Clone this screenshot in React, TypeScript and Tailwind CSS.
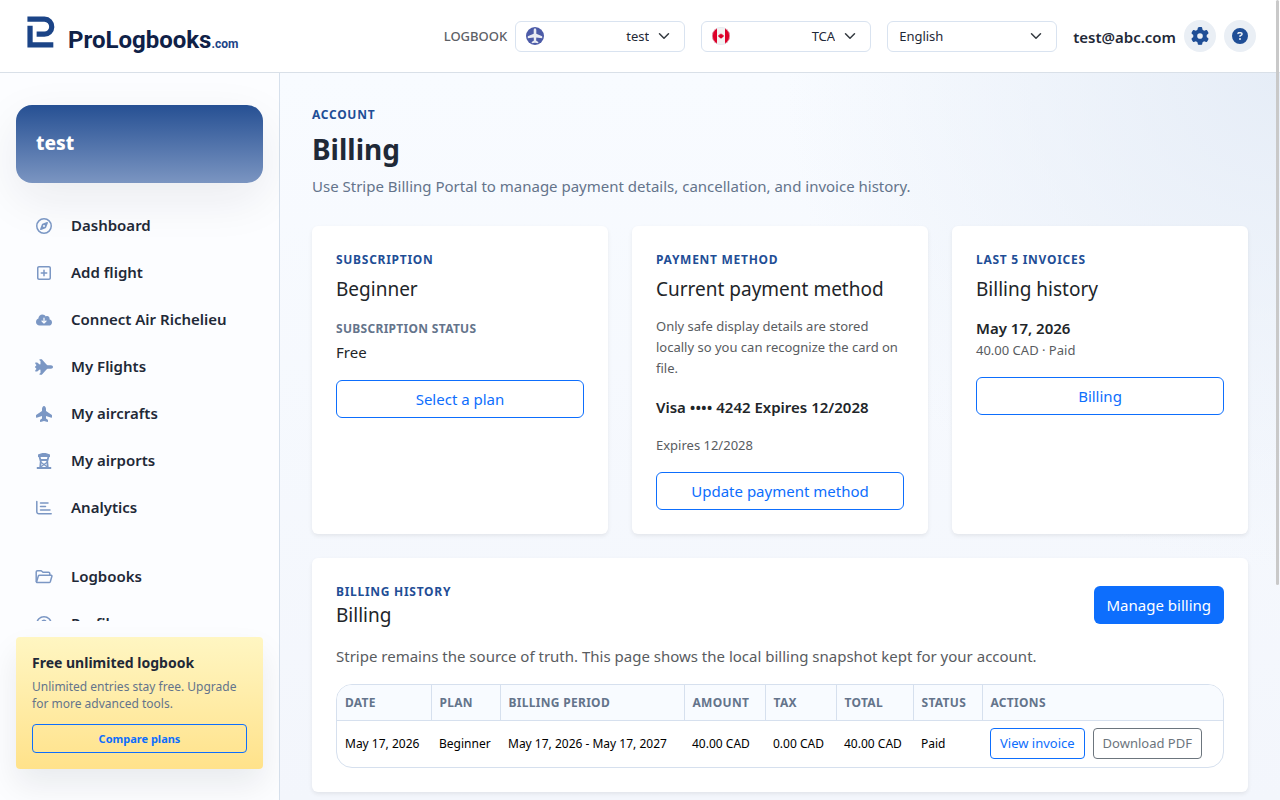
import { FaCircleQuestion, FaCloudArrowDown, FaGear, FaPlaneUp, FaRegCircleUser, FaRegCompass, FaRegSquarePlus } from "react-icons/fa6"
import type { ReactNode } from "react"

const mainNav = [
  { label: "Dashboard", icon: <FaRegCompass /> },
  { label: "Add flight", icon: <FaRegSquarePlus /> },
  { label: "Connect Air Richelieu", icon: <FaCloudArrowDown /> },
  { label: "My Flights", icon: <JetIcon /> },
  { label: "My aircrafts", icon: <FaPlaneUp /> },
  { label: "My airports", icon: <TowerIcon /> },
  { label: "Analytics", icon: <ChartIcon /> },
]

const accountNav = [
  { label: "Logbooks", icon: <FolderIcon /> },
  { label: "Profile", icon: <FaRegCircleUser /> },
]

const invoices = [
  {
    date: "May 17, 2026",
    plan: "Beginner",
    period: "May 17, 2026 - May 17, 2027",
    amount: "40.00 CAD",
    tax: "0.00 CAD",
    total: "40.00 CAD",
    status: "Paid",
  },
]

function JetIcon() {
  return (
    <svg viewBox="0 0 18 16" fill="currentColor">
      <path d="M4.500.3h2.300L11.500 5.600l1 .7h3.500c1 0 2 .8 2 1.700s-1 1.700-2 1.700h-3.500l-1 .7-4.700 5.300H4.500v-1l1-.6v-3.300l-.8-.2-2.500 1.900H.300V11l.9-.5V9.300L.2 8.700V7.300l1-.6V5.500L.300 5V3.500h1.900l2.500 1.900.8-.2V1.900l-1-.6z" />
    </svg>
  )
}

function TowerIcon() {
  return (
    <svg viewBox="0 0 16 16" fill="none" stroke="currentColor" strokeWidth="1.800">
      <path fill="currentColor" stroke="none" d="M8 0c2 0 4.500.7 6 1.600V4H2V1.600C3.500.7 6 0 8 0zM.8 14h14.400v2H.8z" />
      <path d="M3.500 3.500 4.400 7h7.200l.9-3.500M4.200 14.500l.7-8M11.800 14.500l-.7-8" />
      <path strokeWidth="1.400" d="m4.500 9 7 5M11.500 9l-7 5" />
    </svg>
  )
}

function ChartIcon() {
  return (
    <svg viewBox="0 0 16 16" fill="none" stroke="currentColor" strokeWidth="1.5" strokeLinecap="round">
      <path d="M.8 1.500v10.300a2 2 0 0 0 2 2h12.400" />
      <path d="M4.500 3h7.500M4.500 6.500h5M4.500 10h9.500" />
    </svg>
  )
}

function FolderIcon() {
  return (
    <svg viewBox="0 0 18 16" fill="none" stroke="currentColor" strokeWidth="1.5" strokeLinejoin="round">
      <path d="M1.200 13V3c0-.8.500-1.300 1.300-1.300h3.700L8 3.300h5.500c.8 0 1.300.5 1.300 1.300v1.400" />
      <path d="M1.500 13.300 3.300 7.100c.2-.5.600-.8 1.200-.8h11.700c.6 0 .9.500.7 1l-1.600 5.400c-.2.5-.6.800-1.200.8H2c-.3 0-.5-.1-.5-.2z" />
    </svg>
  )
}

function LogoMark() {
  return (
    <svg width="28" height="32" viewBox="0 0 28 33" fill="none" stroke="#1b4487" strokeWidth="5.4">
      <path d="M0 3.2h17.5a7.8 7.8 0 0 1 7.6 8.2 7.6 7.6 0 0 1-7.6 7.4H9.5" />
      <path d="M2.7 10v19.7h24" />
    </svg>
  )
}

function PlaneBadge() {
  return (
    <svg width="18" height="18" viewBox="0 0 18 18">
      <circle cx="9" cy="9" r="9" fill="#4c5ba7" />
      <path
        fill="#e8eaf2"
        d="M9 1.200c.9 0 1.300 1 1.300 2v3.600l5.900 2.400v2l-5.900-.8-.2 3.200 2.200 1.500v1.100L9 15.700l-3.300.5v-1.100l2.200-1.500-.2-3.200-5.900.8v-2l5.900-2.400V3.200c0-1 .4-2 1.300-2z"
      />
    </svg>
  )
}

function CanadaFlag() {
  return (
    <svg width="18" height="18" viewBox="0 0 18 18">
      <clipPath id="flag-clip">
        <circle cx="9" cy="9" r="9" />
      </clipPath>
      <g clipPath="url(#flag-clip)">
        <path fill="#f2f2f2" d="M0 0h18v18H0z" />
        <path fill="#dd0028" d="M0 0h5v18H0zM13 0h5v18h-5z" />
        <path fill="#dd0028" d="m9 6.200.8 1.200.8-.3-.1 1.200 1.300-.4-.3 1 .5.300-1.700 1.300.1.600-1.100-.2v1.100h-.6v-1.100l-1.100.2.1-.6L6 9.200l.5-.3-.3-1 1.300.4-.1-1.200.8.3z" />
      </g>
      <circle cx="9" cy="9" r="8.700" fill="none" stroke="#dde4ee" strokeWidth=".6" />
    </svg>
  )
}

function HeaderSelect({ id, value, label, icon }: { id: string; value: string; label?: string; icon?: ReactNode }) {
  return (
    <div className="flex items-center gap-2">
      {label ? (
        <label htmlFor={id} className="pt-0.5 text-[13px] font-medium text-[#5c6066]">
          {label}
        </label>
      ) : null}
      <div className="relative w-[170px]">
        {icon ? <span className="pointer-events-none absolute top-1/2 left-[11px] -translate-y-1/2">{icon}</span> : null}
        <select
          id={id}
          aria-label={label ?? id}
          className={
            icon
              ? "h-[31px] w-full appearance-none rounded-md border border-[#d9e3f0] bg-white pt-0.5 pr-[35px] pl-10 text-[13px] text-[#1f2937] [text-align-last:right]"
              : "h-[31px] w-full appearance-none rounded-md border border-[#d9e3f0] bg-white pt-0.5 pr-9 pl-[11px] text-[13px] text-[#1f2937]"
          }
        >
          <option>{value}</option>
        </select>
        <svg
          className="pointer-events-none absolute top-[9px] right-[15px]"
          width="12"
          height="12"
          viewBox="0 0 16 16"
          fill="none"
          stroke="#343a40"
          strokeWidth="2"
          strokeLinecap="round"
          strokeLinejoin="round"
        >
          <path d="m2 5 6 6 6-6" />
        </svg>
      </div>
    </div>
  )
}

function NavItem({ label, icon }: { label: string; icon: ReactNode }) {
  return (
    <li>
      <a href="#" className="flex h-[47px] items-center gap-[15px] px-4 text-[15px] font-semibold text-[#1f2937]">
        <span className="flex w-6 justify-center text-[#7b97c4] [&>svg]:h-4 [&>svg]:w-auto">{icon}</span>
        {label}
      </a>
    </li>
  )
}

function Eyebrow({ children }: { children: ReactNode }) {
  return <p className="text-xs leading-5 font-bold tracking-[0.06em] text-[#1f4e96] uppercase">{children}</p>
}

function Panel({ eyebrow, title, children }: { eyebrow: string; title: string; children: ReactNode }) {
  return (
    <section className="rounded-md bg-white p-6 shadow-[0_2px_4px_rgba(0,0,0,0.075)]">
      <Eyebrow>{eyebrow}</Eyebrow>
      <h2 className="mt-1.5 mb-3.5 text-[19px] leading-[26px] text-[#212529]">{title}</h2>
      {children}
    </section>
  )
}

function OutlineButton({ children }: { children: ReactNode }) {
  return (
    <button className="mt-4 h-[38px] w-full rounded-md border border-[#0d6efd] text-[15px] text-[#0d6efd]">
      {children}
    </button>
  )
}

function InvoiceTable() {
  return (
    <div className="mt-4 overflow-hidden rounded-2xl border border-[#d6e0ee]">
      <table className="w-full table-fixed border-collapse text-left">
        <colgroup>
          <col className="w-[94px]" />
          <col className="w-[69px]" />
          <col className="w-[184px]" />
          <col className="w-[81px]" />
          <col className="w-[71px]" />
          <col className="w-[77px]" />
          <col className="w-[69px]" />
          <col />
        </colgroup>
        <thead className="bg-[#f8fbff] text-xs tracking-wide text-[#64748b] uppercase">
          <tr className="h-[35px] border-b border-[#d6e0ee] *:border-l *:border-[#d6e0ee] *:px-2 *:pt-0.5 *:font-bold *:first:border-l-0">
            <th>Date</th>
            <th>Plan</th>
            <th>Billing period</th>
            <th>Amount</th>
            <th>Tax</th>
            <th>Total</th>
            <th>Status</th>
            <th>Actions</th>
          </tr>
        </thead>
        <tbody className="text-xs text-black">
          {invoices.map((inv) => (
            <tr key={inv.date} className="h-[47px] *:px-2">
              <td>{inv.date}</td>
              <td>{inv.plan}</td>
              <td>{inv.period}</td>
              <td>{inv.amount}</td>
              <td>{inv.tax}</td>
              <td>{inv.total}</td>
              <td>{inv.status}</td>
              <td>
                <div className="flex gap-2 text-[13px]">
                  <button className="h-[31px] rounded border border-[#0d6efd] px-[9px] whitespace-nowrap text-[#0d6efd]">
                    View invoice
                  </button>
                  <button className="h-[31px] rounded border border-[#6c757d] px-[9px] whitespace-nowrap text-[#6c757d]">
                    Download PDF
                  </button>
                </div>
              </td>
            </tr>
          ))}
        </tbody>
      </table>
    </div>
  )
}

export default function App() {
  return (
    <div className="relative flex h-screen flex-col overflow-hidden bg-white font-['Noto_Sans',sans-serif]">
      <header className="flex h-[73px] shrink-0 items-center justify-between border-b border-[#d9e0e8] bg-white pr-6 pl-[27px]">
        <a href="#" aria-label="ProLogbooks.com" className="flex items-baseline gap-[13px]">
          <LogoMark />
          <span className="font-['Roboto',sans-serif] text-2xl leading-8 font-bold text-[#0f2147]">
            ProLogbooks<span className="text-xs text-[#1b4487]">.com</span>
          </span>
        </a>
        <div className="flex items-center gap-4">
          <HeaderSelect id="logbook" label="LOGBOOK" value="test" icon={<PlaneBadge />} />
          <HeaderSelect id="authority" value="TCA" icon={<CanadaFlag />} />
          <HeaderSelect id="language" value="English" />
          <div className="flex items-center gap-2">
            <span className="pt-0.5 text-[15px] font-semibold text-[#1f2937]">test@abc.com</span>
            <button aria-label="Settings" className="flex size-8 items-center justify-center rounded-full bg-[#eaeff5] text-lg text-[#1f4e96]">
              <FaGear />
            </button>
            <button aria-label="Help" className="flex size-8 items-center justify-center rounded-full bg-[#eaeff5] text-base text-[#1f4e96]">
              <FaCircleQuestion />
            </button>
          </div>
        </div>
      </header>

      <div className="flex min-h-0 flex-1">
        <aside className="flex w-[280px] shrink-0 flex-col border-r border-[#d6e0ec] bg-[#fcfdff] px-4 pt-8 pb-[31px]">
          <div className="flex h-[78px] shrink-0 items-center rounded-2xl bg-linear-to-b from-[#265093] to-[#7b95c1] px-5 pb-0.5 shadow-[0_16px_48px_rgba(20,20,50,0.08)]">
            <p className="text-[19px] font-extrabold text-white">test</p>
          </div>
          <nav className="mt-[19px] mb-4 min-h-0 flex-1 overflow-hidden">
            <ul>
              {mainNav.map((item) => (
                <NavItem key={item.label} {...item} />
              ))}
            </ul>
            <ul className="mt-[22px]">
              {accountNav.map((item) => (
                <NavItem key={item.label} {...item} />
              ))}
            </ul>
          </nav>
          <div className="shrink-0 rounded bg-linear-to-b from-[#fff6c2] to-[#ffe28a] p-4 shadow-[0_16px_32px_rgba(15,23,42,0.08)]">
            <p className="text-sm leading-5 font-bold text-[#1f2937]">Free unlimited logbook</p>
            <p className="mt-[5px] text-xs leading-[17px] text-[#64748b]">Unlimited entries stay free. Upgrade for more advanced tools.</p>
            <button className="mt-3 h-[29px] w-full rounded border border-[#0d6efd] pt-0.5 text-[11px] font-bold text-[#0d6efd]">
              Compare plans
            </button>
          </div>
        </aside>

        <main className="min-w-0 flex-1 overflow-hidden bg-[radial-gradient(circle_at_top_right,#e6edf7_0%,#f0f5fd00_40%),linear-gradient(to_bottom,#f8fbff,#f3f6fc)] p-8">
          <Eyebrow>Account</Eyebrow>
          <h1 className="mt-1.5 text-[28px] leading-9 font-bold text-[#1f2937]">Billing</h1>
          <p className="mt-[7px] text-[15px] leading-6 text-[#64748b]">
            Use Stripe Billing Portal to manage payment details, cancellation, and invoice history.
          </p>

          <div className="mt-7 grid grid-cols-3 gap-6">
            <Panel eyebrow="Subscription" title="Beginner">
              <p className="pt-0.5 text-xs leading-[22px] font-bold tracking-wide text-[#64748b] uppercase">Subscription status</p>
              <p className="text-[15px] leading-6 text-[#212529]">Free</p>
              <OutlineButton>Select a plan</OutlineButton>
            </Panel>
            <Panel eyebrow="Payment method" title="Current payment method">
              <p className="text-[13px] leading-[21px] text-[#595c5f]">
                Only safe display details are stored locally so you can recognize the card on file.
              </p>
              <p className="my-4 text-[15px] leading-6 font-semibold text-[#212529]">Visa •••• 4242 Expires 12/2028</p>
              <p className="text-[13px] leading-[21px] text-[#595c5f]">Expires 12/2028</p>
              <OutlineButton>Update payment method</OutlineButton>
            </Panel>
            <Panel eyebrow="Last 5 invoices" title="Billing history">
              <p className="text-[15px] leading-6 font-semibold text-[#212529]">May 17, 2026</p>
              <p className="text-[13px] leading-[21px] text-[#595c5f]">40.00 CAD · Paid</p>
              <OutlineButton>Billing</OutlineButton>
            </Panel>
          </div>

          <section className="mt-6 rounded-md bg-white p-6 shadow-[0_2px_4px_rgba(0,0,0,0.075)]">
            <div className="flex items-center justify-between">
              <div>
                <Eyebrow>Billing history</Eyebrow>
                <h2 className="text-[19px] leading-[26px] text-[#212529]">Billing</h2>
              </div>
              <button className="h-[38px] rounded-md bg-[#0d6efd] px-[13px] text-[15px] text-white">Manage billing</button>
            </div>
            <p className="mt-4 text-[15px] leading-6 text-[#595c5f]">
              Stripe remains the source of truth. This page shows the local billing snapshot kept for your account.
            </p>
            <InvoiceTable />
          </section>
        </main>
      </div>

      <div className="absolute top-0 right-px h-[585px] w-[3px] rounded-full bg-[#c9c9c9]" />
    </div>
  )
}
